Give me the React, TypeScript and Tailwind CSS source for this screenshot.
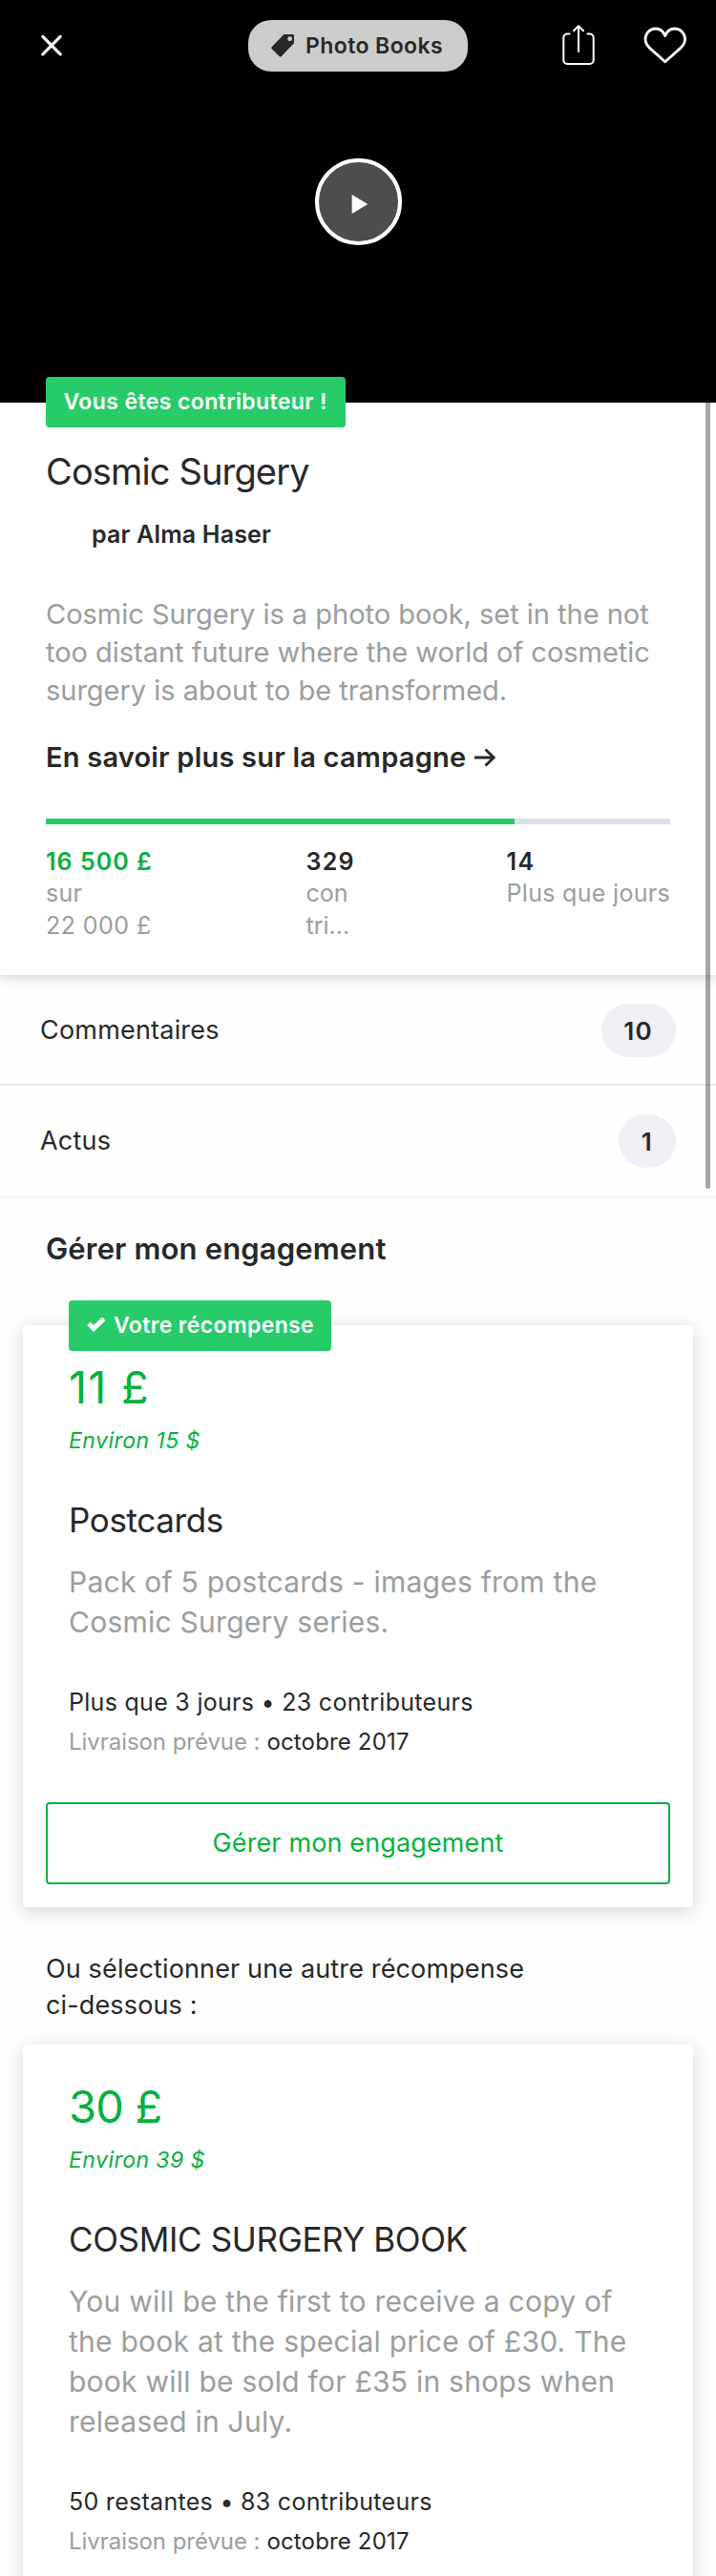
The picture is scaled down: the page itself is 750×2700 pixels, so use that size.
import type { ReactNode } from "react";

function CloseIcon() {
  return (
    <svg width="24" height="24" viewBox="0 0 24 24" fill="none" stroke="#fff" strokeWidth="3.2" strokeLinecap="round">
      <path d="M2.8 2.4 21.2 20.8M21.2 2.4 2.8 20.8" />
    </svg>
  );
}

function TagIcon() {
  return (
    <svg width="24" height="24" viewBox="0 0 24 24" fill="#282828">
      <path
        fillRule="evenodd"
        d="M13.4 0h9.1C23.4 0 24 .6 24 1.5v7.7L10.6 23.3c-.5.6-1.2.6-1.8 0L.6 15.1c-.6-.6-.6-1.2 0-1.8zM19.6 2.3a2.4 2.4 0 1 0 0 4.8 2.4 2.4 0 0 0 0-4.8z"
      />
    </svg>
  );
}

function ShareIcon() {
  return (
    <svg width="36" height="44" viewBox="0 0 36 44" fill="none" stroke="#fff" strokeWidth="2" strokeLinecap="round" strokeLinejoin="round">
      <path d="M8.6 9.5H6.3a4 4 0 0 0-4 4V37a4 4 0 0 0 4 4h23.4a4 4 0 0 0 4-4V13.5a4 4 0 0 0-4-4h-2.3" />
      <path d="M18 28V1.2M13 6.2l5-5 5 5" />
    </svg>
  );
}

function HeartIcon() {
  return (
    <svg width="46" height="40" viewBox="0 0 46 40" fill="none" stroke="#fff" strokeWidth="2.8" strokeLinejoin="round">
      <path d="M22.7 9.6C20.9 4.7 17.2 2 12.7 2 6.8 2 2 6.8 2 12.9c0 3.6 1.5 6.4 4.3 9.2L22.7 36.7l16.4-14.6c2.8-2.8 4.4-5.6 4.4-9.2C43.5 6.800 38.7 2 32.8 2c-4.500 0-8.300 2.700-10.100 7.600z" />
    </svg>
  );
}

function PlayIcon() {
  return (
    <svg width="18" height="22" viewBox="0 0 18 22" fill="#fff">
      <path d="M.6.9 17.2 11 .6 21.1z" />
    </svg>
  );
}

function ArrowIcon() {
  return (
    <svg width="24" height="20" viewBox="0 0 24 20" fill="none" stroke="#282828" strokeWidth="2.9">
      <path d="M1 10h20.5M12.5 1.5l8.700 8.500-8.700 8.500" />
    </svg>
  );
}

function CheckIcon() {
  return (
    <svg width="20" height="17" viewBox="0 0 20 17" fill="#fff">
      <path d="M.2 9 3.7 5.6 7 8.9 16 .4l3.500 3.600L7 16z" />
    </svg>
  );
}

function Row({ label, count, className }: { label: string; count: string; className: string }) {
  return (
    <div className={`flex items-center justify-between pr-[42px] pl-[42px] pt-[30px] ${className}`}>
      <span className="text-[27px] leading-[40px] tracking-[0.2px]">{label}</span>
      <span className="flex h-14 items-center rounded-full bg-[#efeff4] pr-[24px] pl-[23.5px] text-[26px] font-semibold tracking-[1.3px]">
        {count}
      </span>
    </div>
  );
}

type Reward = {
  price: string;
  priceClass: string;
  approx: string;
  title: string;
  lines: string[];
  linesClass: string;
  meta: string;
};

function RewardCard({ reward, className, children }: { reward: Reward; className: string; children?: ReactNode }) {
  return (
    <article className={`relative mx-6 rounded-[4px] bg-white pt-10 shadow-[0_4px_20px_rgba(0,0,0,0.17)] ${className}`}>
      <div className="pl-12 whitespace-nowrap">
        <p className={`text-[47px] leading-[50px] text-[#06b13d] ${reward.priceClass}`}>{reward.price}</p>
        <p className="mt-4 text-[23px] leading-[30px] tracking-[0.45px] text-[#06b13d] italic">{reward.approx}</p>
        <h3 className="mt-[46px] text-[35px] leading-[44px] tracking-[-0.36px]">{reward.title}</h3>
        <p className={`mt-[22px] text-[30px] leading-[42px] text-[#9b9e9e] ${reward.linesClass}`}>
          {reward.lines.map((line) => (
            <span key={line} className="block">
              {line}
            </span>
          ))}
        </p>
        <p className="mt-[42px] text-[25px] leading-[42px] tracking-[0.29px]">{reward.meta}</p>
        <p className="mt-px text-[24px] leading-[40px] tracking-[0.16px]">
          <span className="tracking-[-0.05px] text-[#9b9e9e]">Livraison prévue :</span> octobre 2017
        </p>
      </div>
      {children}
    </article>
  );
}

const postcards: Reward = {
  price: "11 £",
  priceClass: "tracking-[1.2px]",
  approx: "Environ 15 $",
  title: "Postcards",
  lines: ["Pack of 5 postcards - images from the", "Cosmic Surgery series."],
  linesClass: "tracking-[0.25px]",
  meta: "Plus que 3 jours • 23 contributeurs",
};

const book: Reward = {
  price: "30 £",
  priceClass: "tracking-[-0.8px]",
  approx: "Environ 39 $",
  title: "COSMIC SURGERY BOOK",
  lines: [
    "You will be the first to receive a copy of",
    "the book at the special price of £30. The",
    "book will be sold for £35 in shops when",
    "released in July.",
  ],
  linesClass: "tracking-[0.24px]",
  meta: "50 restantes • 83 contributeurs",
};

export default function App() {
  return (
    <div className="relative h-[2700px] w-[750px] overflow-hidden bg-[#fefefe] font-['Inter',sans-serif] text-[#282828]">
      <header className="h-[422px] bg-black pt-[21px]">
        <div className="flex h-[54px] items-center">
          <button aria-label="Fermer" className="ml-[42px]">
            <CloseIcon />
          </button>
          <div className="ml-[194px] flex h-[54px] w-[230px] items-center rounded-[24px] bg-[#cccccc] pl-6">
            <TagIcon />
            <span className="ml-3 text-[23px] font-semibold tracking-[0.41px] whitespace-nowrap">Photo Books</span>
          </div>
          <button aria-label="Partager" className="ml-[98px]">
            <ShareIcon />
          </button>
          <button aria-label="Aimer" className="ml-[50px]">
            <HeartIcon />
          </button>
        </div>
        <button
          aria-label="Lire"
          className="mx-auto mt-[91px] flex size-[91px] items-center justify-center rounded-full border-4 border-white bg-[#4d4d4d] pt-1 pl-[3px]"
        >
          <PlayIcon />
        </button>
      </header>

      <section className="relative flow-root bg-white px-12 pb-[35px] shadow-[0_2px_12px_rgba(0,0,0,0.2)] whitespace-nowrap [clip-path:inset(-27px_0_-20px_0)]">
        <div className="-mt-[27px] h-[53px] w-[314px] rounded-[4px] bg-[#27cc69] pl-[18.5px] text-[23px] leading-[53px] font-semibold tracking-[0.4px] text-white">
          Vous êtes contributeur !
        </div>
        <h1 className="mt-[26px] text-[38px] leading-[40px] tracking-[-0.86px]">Cosmic Surgery</h1>
        <p className="mt-[31px] pl-12 text-[25px] leading-[30px] font-semibold tracking-[0.17px]">par Alma Haser</p>
        <p className="mt-[49px] text-[29px] leading-[40px] tracking-[-0.02px] text-[#9b9e9e]">
          Cosmic Surgery is a photo book, set in the not
          <br />
          too distant future where the world of cosmetic
          <br />
          surgery is about to be transformed.
        </p>
        <a className="mt-8 flex items-center gap-[8px] text-[29px] leading-[36px] font-semibold tracking-[0.21px]">
          En savoir plus sur la campagne
          <ArrowIcon />
        </a>
        <div className="mt-[46px] h-[6px] bg-[#dcdee8]">
          <div className="h-full w-3/4 bg-[#27cc69]" />
        </div>
        <div className="mt-6 flex text-[25px] leading-[34px] text-[#9b9e9e]">
          <div className="w-[272.5px]">
            <p className="leading-[31px] font-semibold tracking-[1.02px] text-[#06b13d]">16 500 £</p>
            <p className="tracking-[0.26px]">sur</p>
            <p className="tracking-[0.45px]">22 000 £</p>
          </div>
          <div className="w-[210px]">
            <p className="leading-[31px] font-semibold tracking-[1.25px] text-[#282828]">329</p>
            <p>con</p>
            <p>tri...</p>
          </div>
          <div>
            <p className="leading-[31px] font-semibold tracking-[1.5px] text-[#282828]">14</p>
            <p className="tracking-[0.31px]">Plus que jours</p>
          </div>
        </div>
      </section>

      <Row label="Commentaires" count="10" className="border-b-2 border-[#e6e6e6] pb-7" />
      <Row label="Actus" count="1" className="border-b-2 border-[#f6f6f6] pb-[30px]" />

      <h2 className="mt-[33px] ml-12 text-[31px] leading-[40px] font-semibold tracking-[0.15px]">Gérer mon engagement</h2>

      <RewardCard reward={postcards} className="mt-[60px] pb-6">
        <div className="absolute -top-[26px] left-12 flex h-[53px] w-[275px] items-center rounded-[4px] bg-[#27cc69] pl-[19px] whitespace-nowrap text-white">
          <span className="mb-[3px]">
            <CheckIcon />
          </span>
          <span className="ml-2 text-[23px] font-semibold tracking-[0.37px]">Votre récompense</span>
        </div>
        <button className="mx-6 mt-[43px] flex h-[86px] w-[654px] items-center justify-center rounded-[4px] border-2 border-[#06b13d] text-[27px] tracking-[0.13px] text-[#06b13d]">
          Gérer mon engagement
        </button>
      </RewardCard>

      <p className="mt-[46px] ml-12 text-[27px] leading-[38px] tracking-[0.14px]">
        Ou sélectionner une autre récompense
        <br />
        ci-dessous :
      </p>

      <RewardCard reward={book} className="mt-[22px] pb-24" />

      <div className="absolute top-[422px] left-[739px] h-[824px] w-[5px] rounded-b-full bg-black/35" />
    </div>
  );
}
